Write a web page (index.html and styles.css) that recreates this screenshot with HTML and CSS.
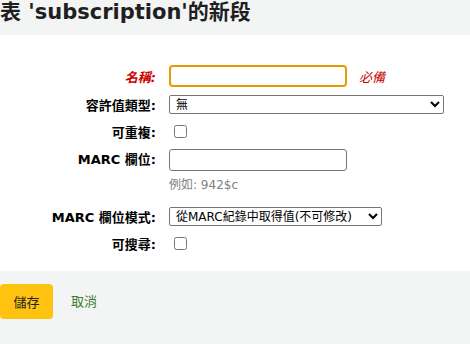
FILE: index.html
```html
<!DOCTYPE html>
<html lang="zh-Hant">
<head>
<meta charset="utf-8">
<link rel="stylesheet" href="styles.css">
</head>
<body>
<header class="page-head">
  <h1 class="title">表 'subscription'的新段</h1>
</header>
<form class="form">
  <div class="rows">
    <div class="row">
      <label class="label required-label" for="name">名稱:</label>
      <div class="field">
        <input id="name" class="text focused" type="text">
        <span class="required">必備</span>
      </div>
    </div>
    <div class="row">
      <label class="label" for="av">容許值類型:</label>
      <div class="field">
        <select id="av" class="select wide"><option>無</option></select>
      </div>
    </div>
    <div class="row">
      <label class="label" for="rep">可重複:</label>
      <div class="field"><input id="rep" class="check" type="checkbox"></div>
    </div>
    <div class="row row-top">
      <label class="label label-top" for="marc">MARC 欄位:</label>
      <div class="field field-col">
        <input id="marc" class="text" type="text">
        <div class="hint">例如: 942$c</div>
      </div>
    </div>
    <div class="row">
      <label class="label" for="mode">MARC 欄位模式:</label>
      <div class="field">
        <select id="mode" class="select mode"><option>從MARC紀錄中取得值(不可修改)</option></select>
      </div>
    </div>
    <div class="row">
      <label class="label" for="srch">可搜尋:</label>
      <div class="field"><input id="srch" class="check" type="checkbox"></div>
    </div>
  </div>
</form>
<footer class="actions">
  <button class="save" type="button">儲存</button>
  <a class="cancel" href="#">取消</a>
</footer>
</body>
</html>
```
FILE: styles.css
```css
html, body {
  margin: 0;
  padding: 0;
  background: #ffffff;
  font-family: "DejaVu Sans", "Noto Sans CJK TC", sans-serif;
  color: #000;
}
.page-head {
  background: #f3f4f4;
  height: 35px;
  display: flex;
  align-items: flex-start;
}
.title {
  margin: 0;
  font-size: 21px;
  font-weight: bold;
  color: #1f1f1f;
  line-height: 24px;
}
.form {
  margin: 0;
  padding: 30px 0 18px 0;
}
.rows {
  display: flex;
  flex-direction: column;
  gap: 8px;
}
.row {
  display: flex;
  align-items: center;
}
.row-top {
  align-items: flex-start;
}
.label {
  width: 156px;
  text-align: right;
  font-size: 13px;
  font-weight: bold;
  padding-right: 13px;
  box-sizing: content-box;
}
.label-top {
  line-height: 22px;
}
.required-label {
  color: #cc0000;
  font-style: italic;
}
.field {
  display: flex;
  align-items: center;
}
.field-col {
  flex-direction: column;
  align-items: flex-start;
}
.text {
  width: 178px;
  height: 22px;
  box-sizing: border-box;
  border: 1px solid #767676;
  border-radius: 3px;
  margin: 0;
  padding: 1px 2px;
  font: 13px "DejaVu Sans", sans-serif;
  background: #fff;
}
.focused {
  border: 2px solid #e69a00;
  border-radius: 4px;
  outline: none;
}
.required {
  margin-left: 12px;
  color: #cc0000;
  font-style: italic;
  font-size: 13px;
}
.select {
  height: 19px;
  box-sizing: border-box;
  border: 1px solid #767676;
  border-radius: 2px;
  background: #fff;
  font: 12px "DejaVu Sans", "Noto Sans CJK TC", sans-serif;
  color: #000;
  margin: 0;
  padding: 0 0 0 2px;
}
.wide { width: 275px; }
.mode { width: 213px; }
.check {
  width: 13px;
  height: 13px;
  margin: 3px 3px 3px 5px;
}
.hint {
  margin: 7px 0 7px 0;
  font-size: 12px;
  color: #808080;
  line-height: 14px;
}
.actions {
  background: #f3f4f4;
  height: 74px;
  padding-top: 13px;
  box-sizing: border-box;
  display: flex;
  align-items: flex-start;
}
.save {
  width: 53px;
  height: 35px;
  background: #ffc20e;
  border: none;
  border-radius: 4px;
  font: 13px "DejaVu Sans", "Noto Sans CJK TC", sans-serif;
  color: #222;
  padding: 0;
}
.cancel {
  margin-left: 18px;
  line-height: 35px;
  font-size: 13px;
  color: #3d7d2f;
  text-decoration: none;
}
```
